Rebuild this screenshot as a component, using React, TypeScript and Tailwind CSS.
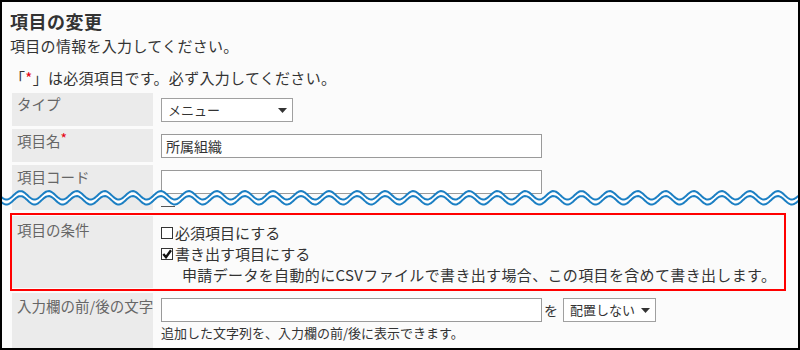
import React from "react";

const WAVE = "#1b7fc3";

function wavePoints(center: number, reverse = false): string[] {
  const pts: string[] = [];
  for (let x = 0; x <= 800; x += 1) {
    const y = center - 4.2 * Math.cos((2 * Math.PI * (x - 20.5)) / 28.05);
    pts.push(`${x},${y.toFixed(2)}`);
  }
  return reverse ? pts.reverse() : pts;
}

function Wave() {
  const top = wavePoints(11.3);
  const bottom = wavePoints(16.3);
  return (
    <svg
      className="absolute left-[-2px] top-[182px]"
      width="800"
      height="26"
      viewBox="0 0 800 26"
    >
      <polygon points={[...top, ...wavePoints(16.3, true)].join(" ")} fill="#ffffff" />
      <polyline points={top.join(" ")} fill="none" stroke={WAVE} strokeWidth="2" />
      <polyline points={bottom.join(" ")} fill="none" stroke={WAVE} strokeWidth="2" />
    </svg>
  );
}

function Caret() {
  return (
    <svg width="9" height="5" viewBox="0 0 9 5" className="shrink-0">
      <polygon points="0,0 9,0 4.5,5" fill="#333" />
    </svg>
  );
}

function Select({ label, className }: { label: string; className: string }) {
  return (
    <div
      className={`flex h-[24px] items-center justify-between border border-[#a0a0a0] bg-white pl-[6px] pr-[5px] text-[13px] leading-[22px] text-[#333] ${className}`}
    >
      <span>{label}</span>
      <Caret />
    </div>
  );
}

function TextInput({ value = "" }: { value?: string }) {
  return (
    <div className="h-[24px] w-[381px] border border-[#9a9a9a] bg-white pl-[4px] text-[14px] leading-[22px] text-[#333]">
      {value}
    </div>
  );
}

function Label({ children, className = "" }: { children: React.ReactNode; className?: string }) {
  return (
    <div
      className={`w-[141px] shrink-0 whitespace-nowrap bg-[#ebebeb] pl-[5px] text-[14.5px] leading-[18px] text-[#666] ${className}`}
    >
      {children}
    </div>
  );
}

function Check({ checked }: { checked?: boolean }) {
  return (
    <span className="mr-[2px] inline-flex h-[12px] w-[12px] shrink-0 items-center justify-center border border-[#333] bg-white">
      {checked && (
        <svg width="10" height="10" viewBox="0 0 10 10">
          <path d="M1.3 5 L4 8.2 L9 1.3" fill="none" stroke="#111" strokeWidth="2.4" />
        </svg>
      )}
    </span>
  );
}

export default function App() {
  return (
    <div
      className="relative box-border h-[350px] w-[800px] overflow-hidden border-2 border-black bg-[#fbfbfb] pl-[8px] pt-[7px] text-[#333]"
      style={{ fontFamily: '"Noto Sans CJK JP", "Noto Sans", sans-serif' }}
    >
      <h1 className="text-[18px] font-bold leading-[24px] tracking-[0.5px]">項目の変更</h1>
      <p className="mt-[3px] text-[15px] leading-[20px] tracking-[0.3px]">項目の情報を入力してください。</p>
      <p className="mt-[12px] text-[15px] leading-[20px] tracking-[0.3px]">
        「<span className="text-[#e60012]">*</span>」は必須項目です。必ず入力してください。
      </p>

      <div className="ml-[2px] mt-[5px] flex flex-col">
        {/* タイプ */}
        <div className="flex h-[33px]">
          <Label className="pt-[2px]">タイプ</Label>
          <div className="pl-[8px] pt-[5px]">
            <Select label="メニュー" className="w-[132px]" />
          </div>
        </div>

        {/* 項目名 */}
        <div className="mt-[3px] flex h-[33px]">
          <Label className="pt-[3px]">
            項目名<span className="align-top text-[14px] leading-[12px] text-[#e60012]">*</span>
          </Label>
          <div className="pl-[8px] pt-[5px]">
            <TextInput value="所属組織" />
          </div>
        </div>

        {/* 項目コード */}
        <div className="mt-[3px] flex h-[45px]">
          <Label className="pt-[3px]">項目コード</Label>
          <div className="pl-[8px] pt-[5px]">
            <TextInput />
            <div className="mt-[12px] h-[1px] w-[14px] bg-[#555]" />
          </div>
        </div>

        {/* 項目の条件 */}
        <div className="-ml-[2px] mt-[3px] w-[776px] border-2 border-[#ff0000] py-[1px]">
          <div className="flex h-[72px]">
            <Label className="pt-[5px]">項目の条件</Label>
            <div className="pl-[8px] pt-[6px] text-[15px] leading-[21px] text-[#333]">
              <div className="flex items-center">
                <Check />
                必須項目にする
              </div>
              <div className="flex items-center">
                <Check checked />
                書き出す項目にする
              </div>
              <div className="pl-[21px] tracking-[0.35px]">
                申請データを自動的にCSVファイルで書き出す場合、この項目を含めて書き出します。
              </div>
            </div>
          </div>
        </div>

        {/* 入力欄の前/後の文字 */}
        <div className="mt-[2px] flex h-[60px]">
          <Label className="pt-[4px]">入力欄の前/後の文字</Label>
          <div className="pl-[8px] pt-[5px]">
            <div className="flex items-center">
              <TextInput />
              <span className="ml-[2px] mr-[5px] text-[14px] leading-[22px]">を</span>
              <Select label="配置しない" className="w-[93px]" />
            </div>
            <p className="mt-[2px] text-[13px] leading-[18px] text-[#333]">
              追加した文字列を、入力欄の前/後に表示できます。
            </p>
          </div>
        </div>
      </div>

      <Wave />
    </div>
  );
}
